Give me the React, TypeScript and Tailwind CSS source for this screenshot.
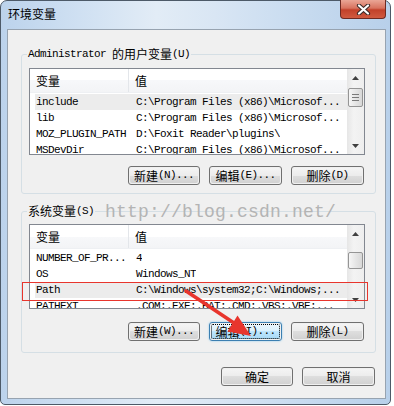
import clsx from 'clsx';
import type { ReactNode } from 'react';

const CJK = /[\u3000-\u9fff\uff00-\uffef]/;

// splits a label into CJK and latin runs so each gets its own font
function T({ s }: { s: string }) {
  const parts = s.match(/[\u3000-\u9fff\uff00-\uffef]+|[^\u3000-\u9fff\uff00-\uffef]+/g) ?? [];
  return (
    <>
      {parts.map((p, i) =>
        CJK.test(p) ? (
          <span key={i} className="font-['Noto_Sans_CJK_SC',sans-serif] text-[12px] tracking-normal">{p}</span>
        ) : (
          <span key={i} className="font-['Liberation_Mono',monospace] text-[11px] tracking-[-0.6px] whitespace-pre">{p}</span>
        ),
      )}
    </>
  );
}

function Btn({ label, focus, wide }: { label: string; focus?: boolean; wide?: boolean }) {
  return (
    <div
      className={clsx(
        'h-[19px] rounded-[3px] border p-px',
        wide ? 'w-[73px]' : 'w-[72px]',
        focus ? 'border-[#3c7fb1] shadow-[0_0_2px_#7ec4ef]' : 'border-[#707070]',
      )}
    >
      <div
        className={clsx(
          'flex h-full items-center justify-center rounded-[2px] leading-[15px] text-black',
          focus
            ? 'bg-[linear-gradient(#eaf6fd_0%,#d9f0fc_50%,#bee6fd_50%,#a7d9f5_100%)] outline outline-1 outline-dotted outline-black -outline-offset-1'
            : 'bg-[linear-gradient(#f4f4f4_0%,#ececec_50%,#dedede_50%,#d2d2d2_100%)]',
        )}
      >
        <T s={label} />
      </div>
    </div>
  );
}

function Arrow({ up }: { up?: boolean }) {
  return (
    <div className="flex h-[17px] items-center justify-center">
      <svg width="7" height="4" viewBox="0 0 7 4">
        <path d={up ? 'M0 4 L3.5 0 L7 4 Z' : 'M0 0 L3.5 4 L7 0 Z'} fill="#404040" />
      </svg>
    </div>
  );
}

function ScrollBar({ thumbTop, thumbH, grip }: { thumbTop: number; thumbH: number; grip?: boolean }) {
  return (
    <div className="flex w-[17px] flex-col bg-[linear-gradient(90deg,#e6e6e6,#f3f3f3_40%,#eeeeee)]">
      <Arrow up />
      <div className="flex-1">
        <div
          className="mx-px flex w-[15px] flex-col items-center justify-center gap-[2px] rounded-[2px] border border-[#959595] bg-[linear-gradient(90deg,#f6f6f6,#e6e6e6_50%,#d8d8d8)]"
          style={{ marginTop: thumbTop, height: thumbH }}
        >
          {grip && (
            <>
              <div className="h-px w-[7px] bg-[#7a7a7a]" />
              <div className="h-px w-[7px] bg-[#7a7a7a]" />
              <div className="h-px w-[7px] bg-[#7a7a7a]" />
            </>
          )}
        </div>
      </div>
      <Arrow />
    </div>
  );
}

type Row = [string, string];

function ListView({
  rows,
  h,
  sel,
  thumbTop,
  thumbH,
  grip,
}: {
  rows: Row[];
  h: number;
  sel: number;
  thumbTop: number;
  thumbH: number;
  grip?: boolean;
}) {
  return (
    <div className="flex w-[336px] overflow-hidden border border-[#828790] bg-white" style={{ height: h }}>
      <div className="flex-1 overflow-hidden">
        <div className="flex h-[24px] border-b border-[#eef0f3] bg-[linear-gradient(#ffffff,#ffffff_50%,#f7f8fa_50%,#f3f4f6)] text-black">
          <div className="flex h-full w-[99px] items-center border-r border-[#e3e6ea] pl-[6px]">
            <T s="变量" />
          </div>
          <div className="flex h-full items-center pl-[6px]">
            <T s="值" />
          </div>
        </div>
        <div className="pt-px">
          {rows.map(([k, v], i) => (
            <div
              key={k}
              className={clsx('ml-[5px] flex h-[16px] text-black', i === sel && 'bg-[#ececec]')}
            >
              <div className="flex h-[16px] w-[94px] shrink-0 items-center overflow-hidden whitespace-nowrap pl-px">
                <T s={k} />
              </div>
              <div className="flex h-[16px] items-center overflow-hidden whitespace-nowrap pl-[7px]">
                <T s={v} />
              </div>
            </div>
          ))}
        </div>
      </div>
      <ScrollBar thumbTop={thumbTop} thumbH={thumbH} grip={grip} />
    </div>
  );
}

function Group({ title, children, className }: { title: string; children: ReactNode; className?: string }) {
  return (
    <fieldset className={clsx('ml-[13px] w-[355px] rounded-[3px] border border-[#d5dfe5] p-0', className)}>
      <legend className="ml-[5px] flex h-[14px] items-center px-px text-black">
        <T s={title} />
      </legend>
      {children}
    </fieldset>
  );
}

const userVars: Row[] = [
  ['include', 'C:\\Program Files (x86)\\Microsof...'],
  ['lib', 'C:\\Program Files (x86)\\Microsof...'],
  ['MOZ_PLUGIN_PATH', 'D:\\Foxit Reader\\plugins\\'],
  ['MSDevDir', 'C:\\Program Files (x86)\\Microsof...'],
];

const sysVars: Row[] = [
  ['NUMBER_OF_PR...', '4'],
  ['OS', 'Windows_NT'],
  ['Path', 'C:\\Windows\\system32;C:\\Windows;...'],
  ['PATHEXT', '.COM;.EXE;.BAT;.CMD;.VBS;.VBE;...'],
];

export default function App() {
  return (
    <div className="relative h-[406px] w-[394px] bg-white">
      <div className="flex h-[405px] w-[391px] flex-col rounded-t-[7px] rounded-b-[5px] border border-[#4d5a68] bg-[linear-gradient(90deg,#bcd3ec_0%,#cfe0f2_20%,#e2ecf6_40%,#d9e6f4_55%,#c9dcf0_75%,#b8d0ea_100%)] pl-[6px] pr-[4px]">
        {/* title bar */}
        <div className="flex h-[28px] shrink-0 items-start justify-between">
          <div className="pl-px pt-[5px] font-['Noto_Sans_CJK_SC',sans-serif] text-[12px] leading-[16px] text-black">
            环境变量
          </div>
          <div className="-mt-px flex h-[19px] w-[46px] items-center justify-center rounded-b-[4px] border border-t-0 border-[#6e2a22] bg-[linear-gradient(#eaa696_0%,#d8735f_45%,#c2412a_55%,#d05a40_100%)]">
            <svg width="15" height="11" viewBox="0 0 15 11">
              <path d="M3 1.5 L12 9.5 M12 1.5 L3 9.5" stroke="#3b2a28" strokeWidth="4.2" strokeLinecap="round" />
              <path d="M3 1.5 L12 9.5 M12 1.5 L3 9.5" stroke="#ffffff" strokeWidth="2.2" strokeLinecap="round" />
            </svg>
          </div>
        </div>

        {/* client area */}
        <div className="flex h-[370px] w-[379px] shrink-0 flex-col border border-[#97a3b0] bg-[#f0f0f0]">
          <Group title="Administrator 的用户变量(U)" className="mt-[17px]">
            <div className="pb-[8px] pl-[7px] pt-[7px]">
              <ListView rows={userVars} h={87} sel={0} thumbTop={2} thumbH={19} grip />
              <div className="mt-[11px] flex w-[335px] justify-end gap-[9px]">
                <Btn label="新建(N)..." />
                <Btn label="编辑(E)..." wide />
                <Btn label="删除(D)" wide />
              </div>
            </div>
          </Group>

          <Group title="系统变量(S)" className="mt-[10px]">
            <div className="pb-[11px] pl-[7px] pt-[6px]">
              <ListView rows={sysVars} h={85} sel={2} thumbTop={10} thumbH={17} />
              <div className="mt-[13px] flex w-[335px] justify-end gap-[9px]">
                <Btn label="新建(W)..." />
                <Btn label="编辑(I)..." focus wide />
                <Btn label="删除(L)" wide />
              </div>
            </div>
          </Group>

          <div className="mt-[14px] flex justify-end gap-[9px] pr-[10px]">
            <Btn label="确定" />
            <Btn label="取消" wide />
          </div>
        </div>
      </div>

      {/* watermark */}
      <div className="pointer-events-none absolute left-[105px] top-[200px] font-['Liberation_Mono',monospace] text-[18px] leading-[24px] tracking-[0.2px] text-[#b4b4b4]">
        http://blog.csdn.net/
      </div>

      {/* red annotation */}
      <svg className="pointer-events-none absolute left-0 top-0" width="394" height="406">
        <rect x="22.5" y="282.5" width="345" height="18" fill="none" stroke="#e8352d" strokeWidth="1" />
        <line x1="186" y1="291" x2="234" y2="323" stroke="#e8352d" strokeWidth="3.5" strokeLinecap="round" />
        <polygon points="251,336 227.5,331.5 237.5,315.5" fill="#e8352d" />
      </svg>
    </div>
  );
}
